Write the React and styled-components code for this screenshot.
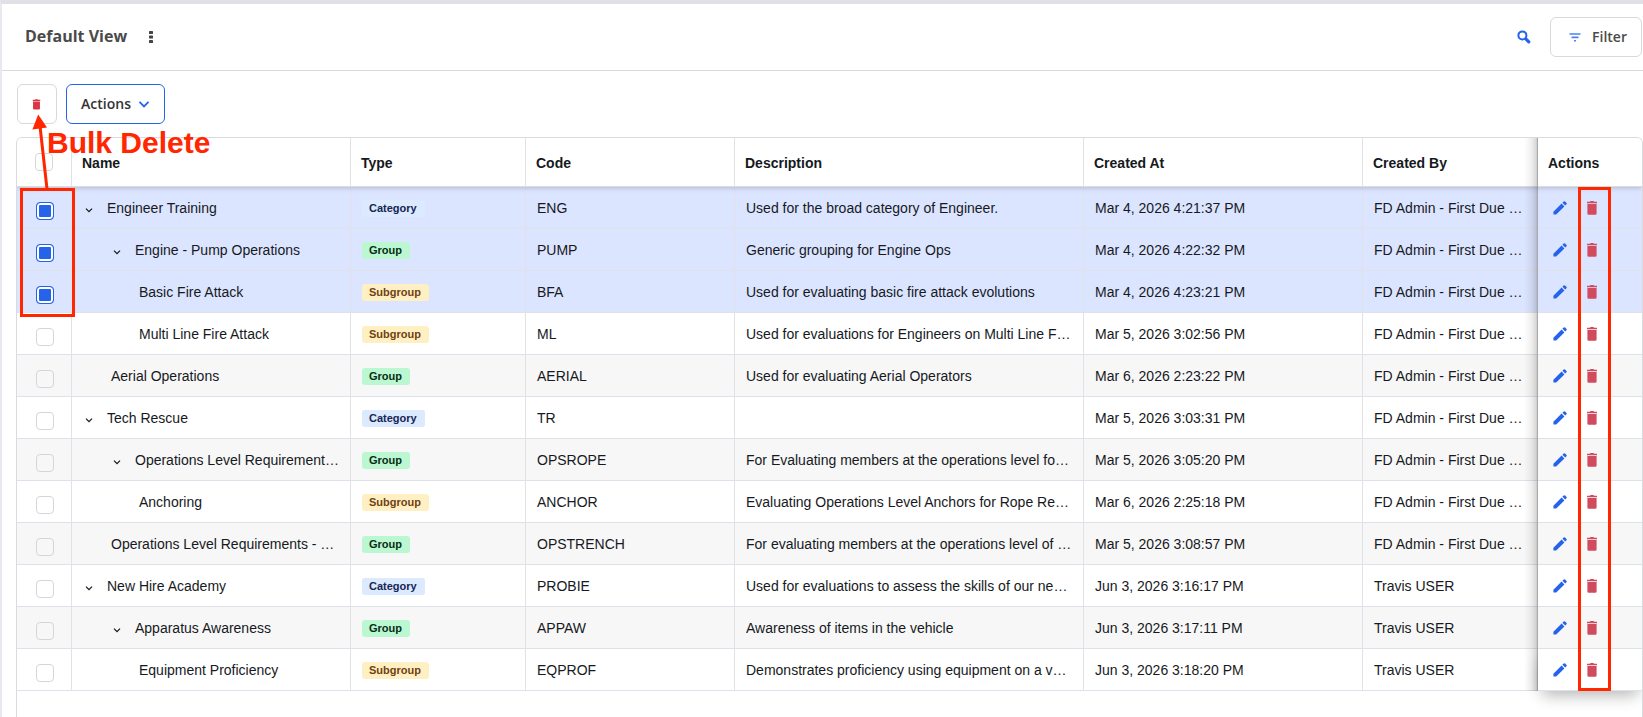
import React, { useState } from 'react'
import styled, { createGlobalStyle } from 'styled-components'

const initialRows = [
  { id: 1, level: 0, open: true, name: 'Engineer Training', type: 'Category', code: 'ENG', description: 'Used for the broad category of Engineer.', createdAt: 'Mar 4, 2026 4:21:37 PM', createdBy: 'FD Admin - First Due …' },
  { id: 2, level: 1, open: true, name: 'Engine - Pump Operations', type: 'Group', code: 'PUMP', description: 'Generic grouping for Engine Ops', createdAt: 'Mar 4, 2026 4:22:32 PM', createdBy: 'FD Admin - First Due …' },
  { id: 3, level: 2, name: 'Basic Fire Attack', type: 'Subgroup', code: 'BFA', description: 'Used for evaluating basic fire attack evolutions', createdAt: 'Mar 4, 2026 4:23:21 PM', createdBy: 'FD Admin - First Due …' },
  { id: 4, level: 2, name: 'Multi Line Fire Attack', type: 'Subgroup', code: 'ML', description: 'Used for evaluations for Engineers on Multi Line F…', createdAt: 'Mar 5, 2026 3:02:56 PM', createdBy: 'FD Admin - First Due …' },
  { id: 5, level: 1, name: 'Aerial Operations', type: 'Group', code: 'AERIAL', description: 'Used for evaluating Aerial Operators', createdAt: 'Mar 6, 2026 2:23:22 PM', createdBy: 'FD Admin - First Due …' },
  { id: 6, level: 0, open: true, name: 'Tech Rescue', type: 'Category', code: 'TR', description: '', createdAt: 'Mar 5, 2026 3:03:31 PM', createdBy: 'FD Admin - First Due …' },
  { id: 7, level: 1, open: true, name: 'Operations Level Requirement…', type: 'Group', code: 'OPSROPE', description: 'For Evaluating members at the operations level fo…', createdAt: 'Mar 5, 2026 3:05:20 PM', createdBy: 'FD Admin - First Due …' },
  { id: 8, level: 2, name: 'Anchoring', type: 'Subgroup', code: 'ANCHOR', description: 'Evaluating Operations Level Anchors for Rope Re…', createdAt: 'Mar 6, 2026 2:25:18 PM', createdBy: 'FD Admin - First Due …' },
  { id: 9, level: 1, name: 'Operations Level Requirements - …', type: 'Group', code: 'OPSTRENCH', description: 'For evaluating members at the operations level of …', createdAt: 'Mar 5, 2026 3:08:57 PM', createdBy: 'FD Admin - First Due …' },
  { id: 10, level: 0, open: true, name: 'New Hire Academy', type: 'Category', code: 'PROBIE', description: 'Used for evaluations to assess the skills of our ne…', createdAt: 'Jun 3, 2026 3:16:17 PM', createdBy: 'Travis USER' },
  { id: 11, level: 1, open: true, name: 'Apparatus Awareness', type: 'Group', code: 'APPAW', description: 'Awareness of items in the vehicle', createdAt: 'Jun 3, 2026 3:17:11 PM', createdBy: 'Travis USER' },
  { id: 12, level: 2, name: 'Equipment Proficiency', type: 'Subgroup', code: 'EQPROF', description: 'Demonstrates proficiency using equipment on a v…', createdAt: 'Jun 3, 2026 3:18:20 PM', createdBy: 'Travis USER' },
]

const badgeColors = {
  Category: { background: '#dbeafe', color: '#172554' },
  Group: { background: '#bbf7d0', color: '#052e16' },
  Subgroup: { background: '#fef0c3', color: '#713f12' },
}

const TrashIcon = ({ width = 12, height = 14 }) => (
  <svg width={width} height={height} viewBox="0 0 12 14" aria-hidden="true">
    <path fill="currentColor" d="M1 0.8h2.8L4.6 0h2.8l0.8 0.8H11v1.4H1zM1.4 3h9.2v9.4a1.3 1.3 0 0 1-1.3 1.3H2.7a1.3 1.3 0 0 1-1.3-1.3z" />
  </svg>
)

const PencilIcon = () => (
  <svg width="14" height="14" viewBox="0 0 14 14" aria-hidden="true">
    <path fill="currentColor" d="M0.4 10.8 8.6 2.6l2.8 2.8-8.2 8.2H0.9a0.5 0.5 0 0 1-0.5-0.5zM9.4 1.8l1.3-1.3a1 1 0 0 1 1.4 0l1.4 1.4a1 1 0 0 1 0 1.4l-1.3 1.3z" />
  </svg>
)

const ChevronIcon = ({ size = 8, stroke = 1.3 }) => (
  <svg width={size} height={size} viewBox="0 0 8 8" fill="none" aria-hidden="true">
    <path d="M1 2.6 4 5.6 7 2.6" stroke="currentColor" strokeWidth={stroke} />
  </svg>
)

const SearchIcon = () => (
  <svg width="14" height="14" viewBox="0 0 14 14" fill="none" stroke="currentColor" aria-hidden="true">
    <circle cx="5.4" cy="5.4" r="4" strokeWidth="2" />
    <path d="m8.8 8.8 3 3" strokeWidth="3.2" strokeLinecap="round" />
  </svg>
)

const FilterIcon = () => (
  <svg width="12" height="9" viewBox="0 0 12 9" stroke="currentColor" strokeWidth="1.6" aria-hidden="true">
    <path d="M0.5 1h11M2.5 4.4h7M5 7.8h2" />
  </svg>
)

const DotsIcon = () => (
  <svg width="4" height="12" viewBox="0 0 4 12" fill="currentColor" aria-hidden="true">
    <rect width="4" height="3" rx="0.6" />
    <rect y="4.5" width="4" height="3" rx="0.6" />
    <rect y="9" width="4" height="3" rx="0.6" />
  </svg>
)

const App = () => {
  const [selected, setSelected] = useState([1, 2, 3])

  const toggleRow = (id) => {
    setSelected((prev) => (prev.includes(id) ? prev.filter((item) => item !== id) : [...prev, id]))
  }

  const toggleAll = () => {
    setSelected(selected.length === initialRows.length ? [] : initialRows.map((row) => row.id))
  }

  return (
    <Page>
      <GlobalStyle />
      <Header>
        <Title>Default View</Title>
        <IconButton aria-label="View options" $color="#444">
          <DotsIcon />
        </IconButton>
        <HeaderTools>
          <IconButton aria-label="Search" $color="#2563eb">
            <SearchIcon />
          </IconButton>
          <FilterButton>
            <FilterIcon />
            <span>Filter</span>
          </FilterButton>
        </HeaderTools>
      </Header>

      <Toolbar>
        <DeleteButton aria-label="Delete selected">
          <TrashIcon width={9} height={11} />
        </DeleteButton>
        <ActionsButton>
          <span>Actions</span>
          <ChevronIcon size={12} stroke={1.2} />
        </ActionsButton>
      </Toolbar>

      <TableArea>
        <TableFrame>
          <Table>
            <colgroup>
              <Col $width={55} />
              <Col $width={279} />
              <Col $width={175} />
              <Col $width={209} />
              <Col />
              <Col $width={279} />
              <Col $width={175} />
              <Col $width={104} />
            </colgroup>
            <thead>
              <tr>
                <CheckHead>
                  <Checkbox
                    aria-label="Select all"
                    checked={selected.length === initialRows.length}
                    onChange={toggleAll}
                  />
                </CheckHead>
                <HeadCell>Name</HeadCell>
                <HeadCell>Type</HeadCell>
                <HeadCell>Code</HeadCell>
                <HeadCell>Description</HeadCell>
                <HeadCell>Created At</HeadCell>
                <HeadCell>Created By</HeadCell>
                <PinnedHead>Actions</PinnedHead>
              </tr>
            </thead>
            <tbody>
              {initialRows.map((row) => (
                <Row key={row.id} $selected={selected.includes(row.id)}>
                  <CheckCell>
                    <Checkbox
                      aria-label={`Select ${row.name}`}
                      checked={selected.includes(row.id)}
                      onChange={() => toggleRow(row.id)}
                    />
                  </CheckCell>
                  <Cell>
                    <NameContent $level={row.level} $leaf={!row.open}>
                      {row.open && (
                        <ExpandButton aria-label={`Collapse ${row.name}`}>
                          <ChevronIcon />
                        </ExpandButton>
                      )}
                      <span>{row.name}</span>
                    </NameContent>
                  </Cell>
                  <Cell>
                    <Badge $type={row.type}>{row.type}</Badge>
                  </Cell>
                  <Cell>{row.code}</Cell>
                  <Cell>{row.description}</Cell>
                  <Cell>{row.createdAt}</Cell>
                  <Cell>{row.createdBy}</Cell>
                  <PinnedCell>
                    <RowActions>
                      <IconButton aria-label={`Edit ${row.name}`} $color="#2563eb">
                        <PencilIcon />
                      </IconButton>
                      <IconButton aria-label={`Delete ${row.name}`} $color="#d14b5f">
                        <TrashIcon />
                      </IconButton>
                    </RowActions>
                  </PinnedCell>
                </Row>
              ))}
            </tbody>
          </Table>
        </TableFrame>
        <SelectionMark />
        <DeleteMark />
        <Arrow width="18" height="76" viewBox="0 0 18 76" aria-hidden="true">
          <path d="M15 75 8 12" stroke="#ff2600" strokeWidth="3" />
          <path d="M6.2 0.5 15 13.5 0.4 15.5z" fill="#ff2600" />
        </Arrow>
        <BulkLabel>Bulk Delete</BulkLabel>
      </TableArea>
    </Page>
  )
}

const GlobalStyle = createGlobalStyle`
  * {
    box-sizing: border-box;
  }

  html,
  body,
  #root {
    height: 100%;
  }

  body {
    margin: 0;
    overflow: hidden;
    background: #fff;
    color: #16191d;
    font-family: 'Liberation Sans', Arial, sans-serif;
    font-size: 14px;
  }

  button {
    padding: 0;
    border: 0;
    background: none;
    cursor: pointer;
  }
`

const Page = styled.div`
  display: flex;
  flex-direction: column;
  min-height: 100%;
  border-top: 4px solid #e0e1e6;
  border-left: 2px solid #e8e8ef;
`

const Header = styled.header`
  display: flex;
  align-items: center;
  gap: 22px;
  height: 67px;
  padding: 0 1px 0 23px;
  border-bottom: 1px solid #d9d9db;
`

const Title = styled.h1`
  margin: 0;
  padding-bottom: 2px;
  color: #4a4a4a;
  font-family: 'Open Sans', 'Noto Sans', sans-serif;
  font-size: 16px;
  font-weight: 700;
`

const IconButton = styled.button`
  display: flex;
  align-items: center;
  justify-content: center;
  color: ${({ $color }) => $color};
`

const HeaderTools = styled.div`
  display: flex;
  align-items: center;
  gap: 19px;
  margin-left: auto;
`

const OutlineButton = styled.button`
  display: flex;
  align-items: center;
  justify-content: center;
  height: 40px;
  border: 1px solid #d9d9db;
  border-radius: 6px;
  background: #fff;
  font-family: 'Open Sans', 'Noto Sans', sans-serif;
  font-size: 14px;
  font-weight: 600;

  span {
    padding-bottom: 2px;
  }
`

const FilterButton = styled(OutlineButton)`
  gap: 11px;
  width: 92px;
  padding-left: 4px;
  color: #4a4a4a;

  svg {
    color: #4b83f0;
  }
`

const Toolbar = styled.div`
  display: flex;
  gap: 9px;
  padding: 13px 15px;
`

const DeleteButton = styled(OutlineButton)`
  width: 40px;
  padding-right: 1px;
  color: #dc3545;
`

const ActionsButton = styled(OutlineButton)`
  gap: 7px;
  width: 99px;
  border-color: #2563eb;
  color: #333;

  svg {
    color: #2563eb;
  }
`

const TableArea = styled.main`
  position: relative;
  display: flex;
  flex: 1;
  margin-left: 14px;
`

const TableFrame = styled.div`
  flex: 1;
  overflow: hidden;
  border: 1px solid #d9dbdf;
  border-bottom: 0;
  border-radius: 6px 6px 0 0;
`

const Table = styled.table`
  width: 100%;
  table-layout: fixed;
  border-spacing: 0;

  thead {
    position: relative;
    z-index: 1;
    box-shadow: 0 1px 5px rgba(0, 0, 0, 0.2);
  }
`

const Col = styled.col`
  width: ${({ $width }) => ($width ? `${$width}px` : 'auto')};
`

const HeadCell = styled.th`
  height: 49px;
  padding: 2px 10px 0;
  border-right: 1px solid #e2e2e4;
  border-bottom: 1px solid #dcdcde;
  background: #fff;
  font-weight: 700;
  text-align: left;
`

const CheckHead = styled(HeadCell)`
  padding: 0 0 0 18px;
`

// soft edge on the left of the pinned column
const pinnedEdge = `
  &::before {
    content: '';
    position: absolute;
    top: 0;
    bottom: -1px;
    left: -14px;
    width: 14px;
    background: linear-gradient(
      to left,
      rgba(0, 0, 0, 0.28),
      rgba(0, 0, 0, 0.15) 15%,
      rgba(0, 0, 0, 0.06) 50%,
      rgba(0, 0, 0, 0)
    );
    pointer-events: none;
  }
`

const PinnedHead = styled(HeadCell)`
  position: sticky;
  right: 0;
  border-right: 0;

  ${pinnedEdge}
`

const Cell = styled.td`
  height: 42px;
  padding: 0 11px;
  overflow: hidden;
  border-right: 1px solid #e2e2e4;
  border-bottom: 1px solid #dde1ea;
  white-space: nowrap;
`

const CheckCell = styled(Cell)`
  padding: 6px 0 0 19px;
`

const PinnedCell = styled(Cell)`
  position: sticky;
  right: 0;
  padding: 0 15px;
  overflow: visible;
  border-right: 0;
  background: inherit;

  ${pinnedEdge}

  &::before {
    bottom: -1px;
  }
`

const Row = styled.tr`
  background: #fff;

  &:nth-child(odd) {
    background: #f7f7f7;
  }

  ${({ $selected }) => $selected && '&& { background: #dce5ff; }'}
  ${({ $selected }) => $selected && '&& td { border-color: #e0e2e8; }'}

  &:last-child ${PinnedCell} {
    box-shadow: 0 8px 16px -4px rgba(0, 0, 0, 0.3);
    clip-path: inset(0 0 -24px -16px);
  }
`

const Checkbox = styled.input.attrs({ type: 'checkbox' })`
  display: block;
  width: 18px;
  height: 18px;
  margin: 0;
  appearance: none;
  border: 1px solid #d5d6d9;
  border-radius: 4px;

  &:checked {
    border-color: #2563eb;
    background: #2563eb;
    box-shadow: inset 0 0 0 2px #fff;
  }
`

const NameContent = styled.div`
  display: flex;
  align-items: center;
  gap: 14px;
  padding-left: ${({ $level, $leaf }) => $level * 28 + ($leaf ? 0 : 2)}px;
`

const ExpandButton = styled.button`
  display: flex;
  padding-top: 4px;
  color: #16191d;
`

const Badge = styled.span`
  display: inline-block;
  padding: 0 8px 0 7px;
  border-radius: 3px;
  background: ${({ $type }) => badgeColors[$type].background};
  color: ${({ $type }) => badgeColors[$type].color};
  font-size: 11px;
  font-weight: 700;
  line-height: 17px;
`

const RowActions = styled.div`
  display: flex;
  align-items: center;
  gap: 19px;
`

const Mark = styled.div`
  position: absolute;
  z-index: 2;
  border: 3px solid #ff2600;
  pointer-events: none;
`

const SelectionMark = styled(Mark)`
  top: 51px;
  left: 4px;
  width: 55px;
  height: 129px;
`

const DeleteMark = styled(Mark)`
  top: 50px;
  right: 32px;
  width: 33px;
  height: 504px;
`

const Arrow = styled.svg`
  position: absolute;
  z-index: 2;
  top: -23px;
  left: 16px;
  pointer-events: none;
`

const BulkLabel = styled.div`
  position: absolute;
  z-index: 2;
  top: -11px;
  left: 31px;
  color: #ff2600;
  font-size: 30px;
  font-weight: 700;
  line-height: 34px;
  pointer-events: none;
`

export default App
